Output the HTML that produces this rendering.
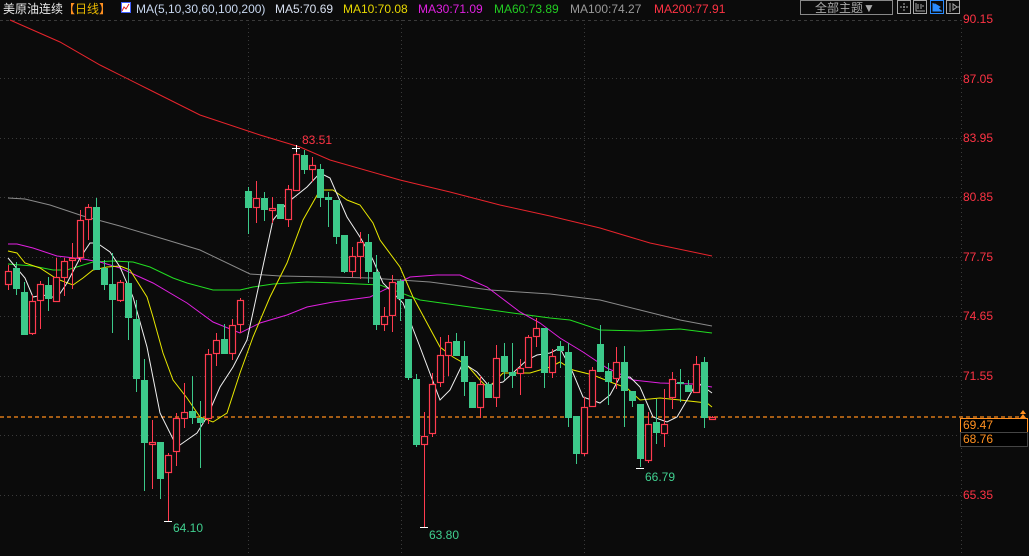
<!DOCTYPE html>
<html><head><meta charset="utf-8">
<style>
html,body{margin:0;padding:0;background:#0b0b0b;}
body{width:1029px;height:556px;overflow:hidden;position:relative;font-family:"Liberation Sans","Noto Sans CJK SC",sans-serif;}
.t{position:absolute;white-space:nowrap;font-size:12px;line-height:14px;}
.ax{position:absolute;left:963px;font-size:12px;color:#ff3344;line-height:14px;}
</style></head><body>
<svg id="s" width="1029" height="556" style="position:absolute;left:0;top:0" xmlns="http://www.w3.org/2000/svg">
<g stroke="#3a3a3a" stroke-dasharray="1,3" stroke-width="1">
<line x1="0" y1="78.5" x2="961" y2="78.5"/><line x1="0" y1="138.5" x2="961" y2="138.5"/>
<line x1="0" y1="197.5" x2="961" y2="197.5"/><line x1="0" y1="257.5" x2="961" y2="257.5"/>
<line x1="0" y1="316.5" x2="961" y2="316.5"/><line x1="0" y1="376.5" x2="961" y2="376.5"/>
<line x1="0" y1="435.5" x2="961" y2="435.5"/><line x1="0" y1="495.5" x2="961" y2="495.5"/>
<line x1="248.5" y1="20" x2="248.5" y2="556"/><line x1="401.5" y1="20" x2="401.5" y2="556"/><line x1="584.5" y1="20" x2="584.5" y2="556"/>
<line x1="961.5" y1="20" x2="961.5" y2="556"/>
</g>
<line x1="0" y1="20.5" x2="961" y2="20.5" stroke="#3a3a3a" stroke-dasharray="3,3"/>
<line x1="0" y1="417" x2="1024" y2="417" stroke="#ff8c1a" stroke-width="1.3" stroke-dasharray="4,3"/>
<g fill="none" stroke-width="1">
<polyline stroke="#e8242c" points="10,20 60,42 100,65 150,90 200,115 260,135 300,147 330,160 400,180 450,192 500,205 550,216 600,228 650,243 712,256"/>
<polyline stroke="#8a8a8a" points="8,198 25,199 50,205 83,216 120,226 167,240 200,250 250,274 280,276 330,277 370,278 430,282 490,290 550,294 600,300 640,310 680,320 712,326"/>
<polyline stroke="#22dd22" points="8,264 33,266 53,270 67,270 80,266 93,262 113,261 133,262 150,267 173,278 187,283 213,290 240,290 253,287 273,284 307,282 337,283 380,285 420,300 470,307 520,314 550,318 570,320 600,330 640,331 680,329 712,333"/>
<polyline stroke="#e020e0" points="8,244 17,244 33,248 57,256 83,259 100,262 120,268 153,283 187,303 213,322 240,333 260,323 287,315 307,307 333,302 370,297 390,287 410,277 437,275 460,275 487,287 520,312 540,323 560,338 583,352 607,368 633,380 660,383 693,384 712,387"/>
<polyline stroke="#e8e800" points="8,251 17,253 25,263 40,268 57,279 73,285 83,278 93,270 107,267 120,266 130,270 147,297 153,317 163,353 173,380 187,398 200,417 213,422 227,413 240,373 253,337 270,297 287,263 303,220 320,190 333,190 347,200 360,205 373,223 380,240 400,267 413,297 427,323 440,347 453,357 467,365 480,380 488,388 503,373 530,373 550,367 560,362 573,370 593,375 613,383 627,388 640,400 660,398 680,400 707,403 712,407"/>
<polyline stroke="#f0f0f0" points="8,258 25,278 33,297 43,295 57,298 67,283 80,258 90,243 97,243 110,252 120,267 133,297 147,347 160,413 177,447 187,440 197,433 207,417 220,387 233,367 247,340 260,280 273,220 287,203 307,187 320,173 330,178 347,217 360,237 373,260 383,283 403,303 420,347 440,400 450,390 463,363 477,372 488,385 503,382 527,360 537,355 550,353 560,348 573,373 583,397 600,403 610,395 620,377 630,377 640,387 653,417 667,422 677,417 687,400 697,382 712,393"/>
</g>
<g id="c"></g>
<g stroke="#fff" stroke-width="1">
<line x1="292" y1="148.5" x2="300" y2="148.5"/><line x1="296.5" y1="145" x2="296.5" y2="152"/>
<line x1="164" y1="521.5" x2="172" y2="521.5"/>
<line x1="420" y1="527.5" x2="428" y2="527.5"/>
<line x1="636" y1="468.5" x2="644" y2="468.5"/>
</g>
<rect x="800.5" y="0.5" width="92" height="14" fill="none" stroke="#888"/>
<g fill="none" stroke="#aaa">
<rect x="897.5" y="0.5" width="13" height="13"/><rect x="913.5" y="0.5" width="13" height="13"/><rect x="946.5" y="0.5" width="13" height="13"/>
<path d="M904 3v8M900 7h8" stroke-dasharray="2,1"/>
<path d="M916 3v8h9M918 4v5M921 4v5M922 6l2 0"/>
<path d="M950 3v9M953 4v6l4-3z M957 7h2"/>
</g>
<rect x="930.5" y="0.5" width="13" height="13" fill="none" stroke="#2a8cff"/>
<path d="M933 3v8h9M935 4v6l5-3z" fill="#2a8cff" stroke="#2a8cff"/>
<rect x="960.5" y="418.5" width="67" height="14" fill="#000" stroke="#ff9020"/>
<rect x="960.5" y="432.5" width="67" height="14" fill="#000" stroke="#444"/>
<path d="M1020 414l3-4 3 4zM1020 418l3-4 3 4z" fill="#ff9020"/>
<rect x="121.5" y="2.5" width="9" height="10" fill="#fff" stroke="#4060ff"/>
<path d="M122 11l2-4 2 2 3-5" stroke="#e02020" fill="none"/>
</svg>
<div class="t" style="left:3px;top:2px;color:#e8e8e8">美原油连续<span style="color:#ff9020">【</span><span style="color:#e8b800">日线</span><span style="color:#ff9020">】</span></div>
<div class="t" style="left:136px;top:2px;color:#c8d8f0">MA(5,10,30,60,100,200)</div>
<div class="t" style="left:275px;top:2px;color:#d8e0f0">MA5:70.69</div>
<div class="t" style="left:343px;top:2px;color:#e8d800">MA10:70.08</div>
<div class="t" style="left:418px;top:2px;color:#e020e0">MA30:71.09</div>
<div class="t" style="left:494px;top:2px;color:#22cc22">MA60:73.89</div>
<div class="t" style="left:570px;top:2px;color:#9a9a9a">MA100:74.27</div>
<div class="t" style="left:654px;top:2px;color:#ff3344">MA200:77.91</div>
<div class="t" style="left:815px;top:1px;color:#aaa">全部主题▼</div>
<div class="ax" style="top:12px">90.15</div>
<div class="ax" style="top:72px">87.05</div>
<div class="ax" style="top:131px">83.95</div>
<div class="ax" style="top:190px">80.85</div>
<div class="ax" style="top:250px">77.75</div>
<div class="ax" style="top:309px">74.65</div>
<div class="ax" style="top:369px">71.55</div>
<div class="ax" style="top:488px;color:#ff3344">65.35</div>
<div class="ax" style="top:418px;color:#ff9020">69.47</div>
<div class="ax" style="top:432px;color:#ff9020">68.76</div>
<div class="t" style="left:302px;top:133px;color:#ff3344">83.51</div>
<div class="t" style="left:173px;top:521px;color:#40d090">64.10</div>
<div class="t" style="left:429px;top:528px;color:#40d090">63.80</div>
<div class="t" style="left:645px;top:470px;color:#40d090">66.79</div>
<script>
var d=[[8,265,290,271,284,1],[16,262,295,268,289,0],[24,282,335,292,335,0],[32,295,335,301,333,1],[40,281,329,284,300,1],[48,277,311,285,299,0],[56,258,302,277,301,1],[64,258,296,261,277,1],[72,243,289,258,260,1],[80,210,262,220,257,1],[88,204,240,207,219,1],[96,198,270,207,270,0],[104,260,290,268,285,0],[112,253,333,284,300,0],[120,280,302,282,300,1],[128,262,340,283,318,0],[136,300,392,319,379,0],[144,359,491,380,443,0],[152,420,489,442,444,1],[160,442,499,442,479,0],[168,453,522,455,472,1],[176,413,466,418,451,1],[184,383,428,412,418,1],[192,376,424,411,418,0],[200,401,468,418,423,0],[208,349,424,354,418,1],[216,333,366,340,353,1],[224,324,354,339,354,0],[232,319,360,325,353,1],[240,298,333,300,324,1],[248,187,234,191,208,0],[256,181,223,198,207,1],[264,192,221,198,210,0],[272,197,223,208,210,1],[280,204,218,204,219,0],[288,185,227,189,219,1],[296,151,190,154,190,1],[304,150,174,155,170,0],[312,157,182,165,169,1],[320,164,207,169,198,0],[328,192,227,197,200,0],[336,200,244,200,237,0],[344,235,273,235,272,0],[352,247,277,256,271,1],[360,232,279,242,256,1],[368,234,283,242,272,0],[376,255,330,272,325,0],[384,307,331,316,324,1],[392,275,332,282,315,1],[400,279,321,281,299,0],[408,299,380,299,378,0],[416,374,447,379,445,0],[424,412,527,436,444,1],[432,373,437,384,433,1],[440,337,387,355,382,1],[448,335,376,342,355,1],[456,333,356,341,356,0],[464,341,396,356,382,0],[472,382,408,382,408,0],[480,376,418,384,407,1],[488,382,398,384,398,0],[496,345,407,358,397,1],[504,343,380,356,372,0],[512,343,388,372,376,0],[520,359,395,368,373,1],[528,335,367,337,367,1],[536,318,347,328,336,1],[544,328,388,328,373,0],[552,349,378,356,372,1],[560,341,368,346,351,0],[568,343,427,352,418,0],[576,416,464,416,454,0],[584,397,456,407,453,1],[592,367,407,370,406,1],[600,325,372,344,372,0],[608,363,405,371,382,0],[616,347,389,362,378,1],[624,346,427,362,391,0],[632,391,407,391,401,0],[640,404,467,404,459,0],[648,412,463,424,460,1],[656,399,444,422,433,0],[664,389,447,424,433,1],[672,372,409,379,397,1],[680,369,402,382,384,0],[688,380,392,385,392,0],[696,356,392,364,392,1],[704,357,428,362,418,0],[712,416,420,417,419,1]];
var h='';d.forEach(function(c){var x=c[0],col=c[5]?'#ff3b4f':'#3cc98a';var bt=c[3],bb=Math.max(c[4],c[3]+1);
h+='<line x1="'+(x+.5)+'" y1="'+c[1]+'" x2="'+(x+.5)+'" y2="'+bt+'" stroke="'+col+'"/>';
h+='<line x1="'+(x+.5)+'" y1="'+bb+'" x2="'+(x+.5)+'" y2="'+c[2]+'" stroke="'+col+'"/>';
if(c[5])h+='<rect x="'+(x-2.5)+'" y="'+(bt+.5)+'" width="6" height="'+(bb-bt)+'" fill="#0b0b0b" stroke="'+col+'" stroke-width="1.2"/>';
else h+='<rect x="'+(x-3)+'" y="'+bt+'" width="7" height="'+(bb-bt)+'" fill="'+col+'"/>';});
document.getElementById('c').innerHTML=h;
</script>
</body></html>
